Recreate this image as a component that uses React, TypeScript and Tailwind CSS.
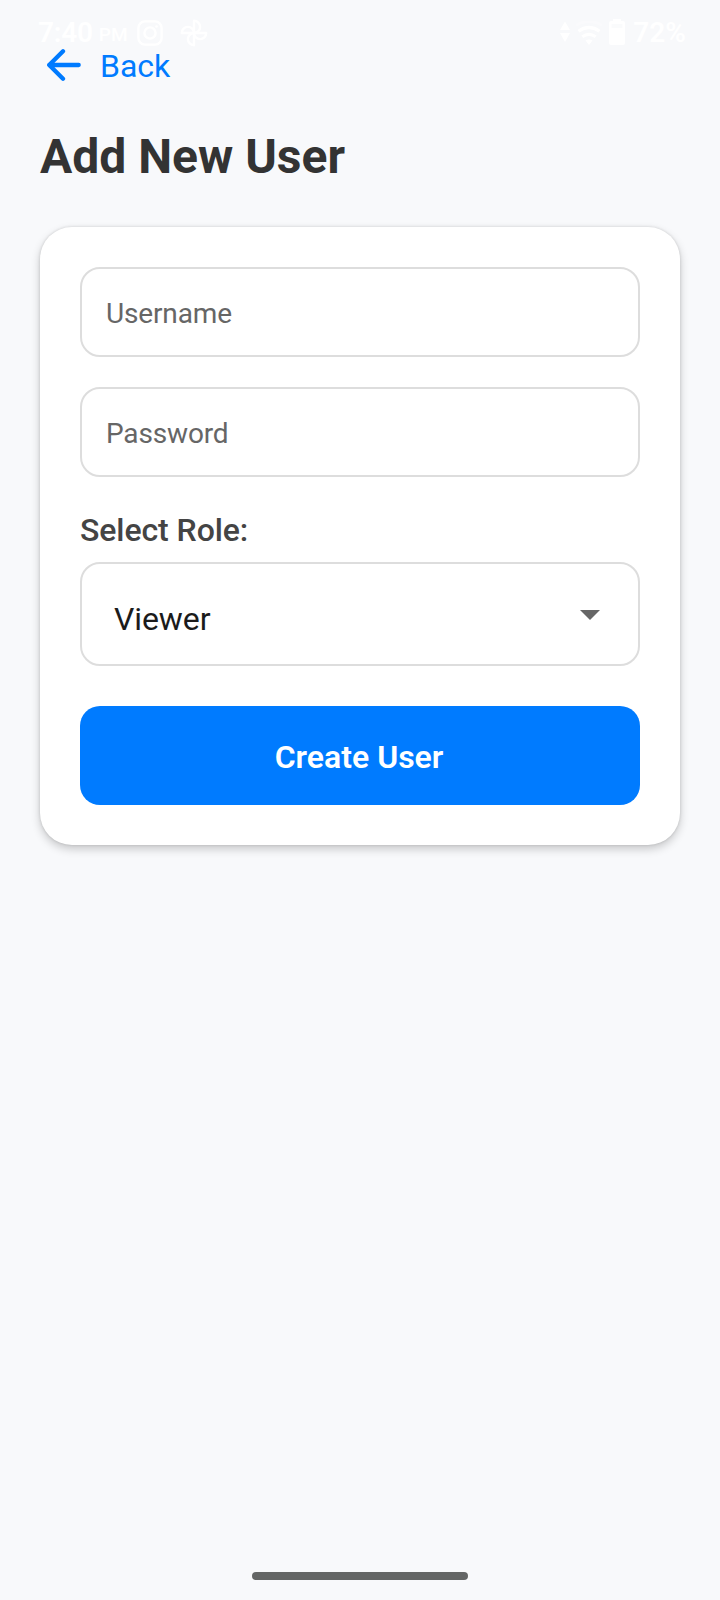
import type { ReactNode } from 'react';

function StatusBar() {
  return (
    <div className="absolute inset-x-0 top-0 flex h-16 items-center pl-[38px] pr-[34px] text-white">
      <span className="mt-[2px] text-[28px] font-semibold leading-8 tracking-[-0.2px]">7:40</span>
      <span className="ml-[6px] mt-[6px] text-[19px] font-medium leading-6">PM</span>
      <svg className="ml-[9px] mt-[2px] size-[26px]" viewBox="0 0 26 26" fill="none" stroke="currentColor" strokeWidth="2.4">
        <rect x="1.4" y="1.4" width="23.2" height="23.2" rx="6.5" />
        <circle cx="13" cy="13" r="5.6" />
        <circle cx="19.5" cy="6.5" r="1.3" fill="currentColor" stroke="none" />
      </svg>
      <svg className="ml-[17px] mt-[2px] size-[28px]" viewBox="0 0 28 28" fill="none" stroke="currentColor" strokeWidth="2.4" strokeLinejoin="round">
        <path d="M14 14V1.8a6.1 6.1 0 0 1 0 12.2" />
        <path d="M14 14h12.2a6.1 6.1 0 0 1-12.2 0" />
        <path d="M14 14v12.2a6.1 6.1 0 0 1 0-12.2" />
        <path d="M14 14H1.8a6.1 6.1 0 0 1 12.2 0" />
      </svg>
      <div className="ml-auto flex items-center">
        <svg className="h-[22px] w-[10px]" viewBox="0 0 10 22" fill="currentColor">
          <path d="M5 0.5 10 9H0ZM0 12h10L5 21Z" />
        </svg>
        <svg className="ml-[6px] mt-[2px] h-6 w-[26px]" viewBox="0 0 26 24" fill="none" stroke="currentColor" strokeWidth="3.2">
          <path d="M0 4.5Q13-3.5 26 4.5" opacity="0.25" />
          <path d="M2.5 10.3Q13 2.7 23.5 10.3" />
          <path d="M6.3 15.8Q13 11 19.7 15.8" />
          <path d="M9.5 19.5Q13 17.3 16.5 19.5L13 24Z" fill="currentColor" stroke="none" />
        </svg>
        <svg className="ml-[7px] h-[26px] w-4" viewBox="0 0 16 26" fill="currentColor">
          <path d="M4 0h8v2h2a2 2 0 0 1 2 2v20a2 2 0 0 1-2 2H2a2 2 0 0 1-2-2V4a2 2 0 0 1 2-2h2Z" />
          <path d="M2.5 5h11v4h-11Z" fill="#fafbfc" />
        </svg>
        <span className="ml-[8px] mt-[2px] text-[28px] font-semibold leading-8">72%</span>
      </div>
    </div>
  );
}

function Field({ children }: { children: ReactNode }) {
  return (
    <div className="flex h-[90px] items-center rounded-[20px] border-2 border-[#dddddd] px-[24px] pt-[4px] text-[28px] tracking-[-0.15px] text-[#666666]">
      {children}
    </div>
  );
}

export default function App() {
  return (
    <div className="relative flex min-h-[1600px] w-full flex-col bg-[#f8f9fb] px-10 pt-[46px] font-['Roboto',sans-serif]">
      <StatusBar />
      <button className="flex h-10 items-center self-start text-[#007bff]">
        <svg className="ml-[6px] h-[34px] w-[36px]" viewBox="0 0 36 34" fill="none" stroke="currentColor" strokeWidth="4.3" strokeLinecap="round" strokeLinejoin="round">
          <path d="M17 2.3 3.2 16 17 29.7M3.2 16h29.5" />
        </svg>
        <span className="ml-[18px] text-[32px] leading-10">Back</span>
      </button>
      <h1 className="mt-[43px] text-[48px] font-bold leading-[56px] text-[#333333]">Add New User</h1>
      <main className="mt-[42px] flex h-[618px] flex-col rounded-[32px] bg-white p-10 shadow-[0_4px_10px_rgba(0,0,0,0.2),0_0_3px_rgba(0,0,0,0.14)]">
        <Field>Username</Field>
        <div className="h-[30px]" />
        <Field>Password</Field>
        <div className="mt-[34px] text-[32px] font-medium leading-[38px] tracking-[-0.08px] text-[#444444]">Select Role:</div>
        <div className="mt-[13px] flex h-[104px] items-center justify-between rounded-[20px] border-2 border-[#dddddd] pl-8 pr-[38px]">
          <span className="mt-[10px] text-[32px] leading-10 tracking-[-0.1px] text-[#1b1b1b]">Viewer</span>
          <svg className="mt-[2px] h-[10px] w-5" viewBox="0 0 20 10" fill="#666666">
            <path d="M0 0h20L10 10Z" />
          </svg>
        </div>
        <button className="mt-10 flex h-[99px] items-center justify-center rounded-[20px] bg-[#007bff] pr-[2px] pt-[2px] text-[32px] font-semibold text-white">
          Create User
        </button>
      </main>
      <div className="mt-auto mb-5 h-2 w-[216px] self-center rounded-full bg-[#646665]" />
    </div>
  );
}
